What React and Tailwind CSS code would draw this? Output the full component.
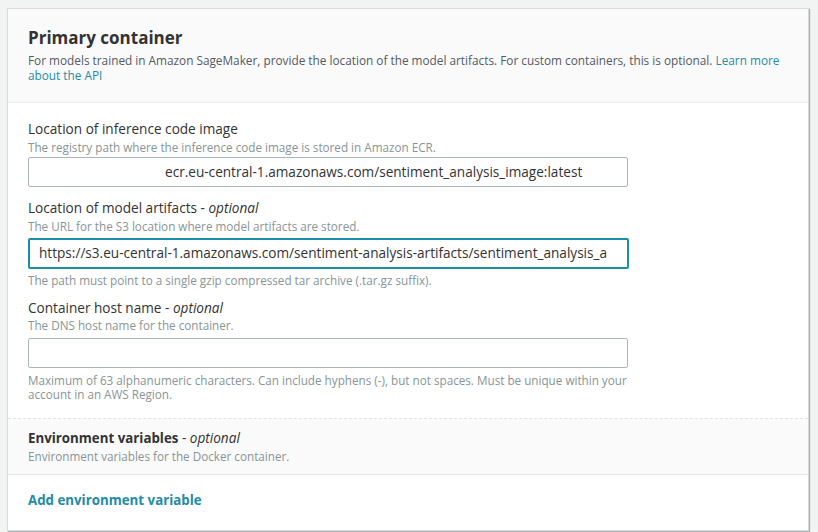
export default function App() {
  const font = { fontFamily: '"Open Sans", "Noto Sans", Arial, sans-serif' };
  return (
    <div className="w-[818px] h-[532px] bg-[#f2f3f3] pt-[8px] pl-[7px] overflow-hidden" style={font}>
      <div className="w-[802px] h-[523px] bg-white border border-[#d5dbdb] shadow-[1px_1px_1px_0_rgba(0,28,36,0.3)] flex flex-col">
        <div className="bg-[#fafafa] border-b border-[#eaeded] px-[20px] pt-[17px] h-[94px]">
          <h2 className="text-[17px] leading-[24px] font-bold text-[#333]">Primary container</h2>
          <p className="text-[11.8px] leading-[15px] text-[#545b64] mt-[3px] w-[760px]">
            For models trained in Amazon SageMaker, provide the location of the model artifacts. For custom containers, this is optional.{" "}
            <span className="text-[#1d8ca8]">Learn more about the API</span>
          </p>
        </div>
        <div className="px-[20px] pt-[17px]">
          <div className="text-[13.6px] leading-[18px] text-[#333]">Location of inference code image</div>
          <div className="text-[11.7px] leading-[16px] text-[#879596] mt-[1px]">The registry path where the inference code image is stored in Amazon ECR.</div>
          <div className="mt-[2px] w-[600px] h-[30px] border border-[#aab7b8] rounded-[2px] flex items-center pl-[136px] text-[13.6px] text-[#333]">
            ecr.eu-central-1.amazonaws.com/sentiment_analysis_image:latest
          </div>

          <div className="text-[13.6px] leading-[18px] text-[#333] mt-[12px]">Location of model artifacts - <i>optional</i></div>
          <div className="text-[11.7px] leading-[16px] text-[#879596] mt-[1px]">The URL for the S3 location where model artifacts are stored.</div>
          <div className="mt-[4px] w-[601px] h-[31px] border-2 border-[#1b8ea9] rounded-[2px] flex items-center pl-[9px] text-[13.6px] text-[#333] overflow-hidden whitespace-nowrap">
            https://s3.eu-central-1.amazonaws.com/sentiment-analysis-artifacts/sentiment_analysis_a
          </div>
          <div className="text-[11.7px] leading-[16px] text-[#879596] mt-[3px]">The path must point to a single gzip compressed tar archive (.tar.gz suffix).</div>

          <div className="text-[13.6px] leading-[18px] text-[#333] mt-[11px]">Container host name - <i>optional</i></div>
          <div className="text-[11.7px] leading-[16px] text-[#879596] mt-[0px]">The DNS host name for the container.</div>
          <div className="mt-[5px] w-[600px] h-[30px] border border-[#aab7b8] rounded-[2px]"></div>
          <div className="text-[11.7px] leading-[14px] text-[#879596] mt-[5px] w-[620px]">
            Maximum of 63 alphanumeric characters. Can include hyphens (-), but not spaces. Must be unique within your account in an AWS Region.
          </div>
        </div>
        <div className="mt-[17px] border-t border-dashed border-[#e1e4e4]">
          <div className="bg-[#fafafa] border-b border-[#e4e7e7] px-[20px] pt-[10px] h-[56px]">
            <div className="text-[13.6px] leading-[18px] text-[#333]"><span className="font-bold text-[13.3px]">Environment variables</span> - <i>optional</i></div>
            <div className="text-[11.7px] leading-[16px] text-[#879596] mt-[1px]">Environment variables for the Docker container.</div>
          </div>
        </div>
        <div className="px-[20px] pt-[15px]">
          <div className="text-[13.3px] leading-[20px] font-bold text-[#1d8ca8]">Add environment variable</div>
        </div>
      </div>
    </div>
  );
}
